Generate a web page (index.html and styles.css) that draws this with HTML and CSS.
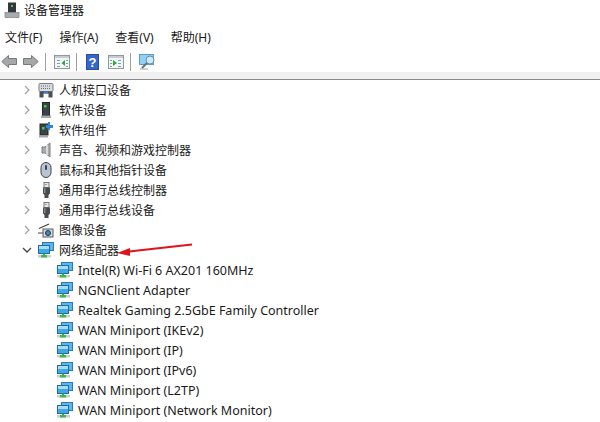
FILE: index.html
```html
<!DOCTYPE html>
<html lang="zh">
<head>
<meta charset="utf-8">
<title>设备管理器</title>
<link rel="stylesheet" href="styles.css">
</head>
<body>
<svg class="defs" width="0" height="0">
  <defs>
    <symbol id="net" viewBox="0 0 16 16">
      <rect x="4.500" y="0.500" width="11" height="8" fill="#5cb6ea" stroke="#2f78b0"/>
      <rect x="0.500" y="3.500" width="11" height="8" fill="#3fa8e4" stroke="#1f6aa8"/>
      <rect x="1" y="4" width="10" height="3" fill="#a8dcf5"/>
      <rect x="5" y="11.500" width="2" height="2" fill="#35a845"/>
      <rect x="0" y="13" width="13" height="2.500" fill="#c9cfca"/>
      <rect x="3" y="13" width="6" height="2.500" fill="#3fb651"/>
    </symbol>
    <symbol id="usb" viewBox="0 0 16 16">
      <rect x="6" y="0.500" width="5" height="5" fill="#e8e8e8" stroke="#777"/>
      <rect x="7.500" y="2" width="1" height="1" fill="#555"/>
      <path d="M5 5.500h7v6l-1.500 1.500v3h-4v-3L5 11.500z" fill="#4a4d50"/>
      <rect x="6" y="6" width="1.500" height="5" fill="#85888b"/>
    </symbol>
    <symbol id="chev-r" viewBox="0 0 10 10">
      <path d="M3 1l4 4-4 4" fill="none" stroke="#a6a6a6" stroke-width="1.300"/>
    </symbol>
    <symbol id="tower" viewBox="0 0 16 16">
      <rect x="4.500" y="0.500" width="7" height="13" fill="#3d4247" stroke="#22262a"/>
      <rect x="6" y="3" width="2.500" height="2.500" fill="#35d24a"/>
      <rect x="3" y="13.500" width="10" height="2.500" fill="#a4a7aa"/>
    </symbol>
  </defs>
</svg>
<div class="window">
  <header class="title">
    <svg class="title-icon" viewBox="0 0 16 16" width="16" height="16"><rect x="4" y="0.500" width="8" height="10" fill="#33373b"/><rect x="7" y="3" width="2" height="2" fill="#35d24a"/><rect x="1" y="10.500" width="14" height="5" fill="#a9acaf" stroke="#707478" stroke-width=".6"/></svg>
    <span>设备管理器</span>
  </header>
  <nav class="menu">
    <span>文件(F)</span><span>操作(A)</span><span>查看(V)</span><span>帮助(H)</span>
  </nav>
  <div class="toolbar">
    <svg width="16" height="15" viewBox="0 0 16 15"><path d="M.8 7.500l6.700-6v3h8v6h-8v3z" fill="#a5a8a8" stroke="#777a7a"/></svg>
    <svg width="16" height="15" viewBox="0 0 16 15"><path d="M15.200 7.500l-6.700-6v3h-8v6h8v3z" fill="#a5a8a8" stroke="#777a7a"/></svg>
    <i class="sep"></i>
    <svg width="16" height="14" viewBox="0 0 16 14"><rect x=".5" y=".5" width="15" height="13" fill="#f4f6f6" stroke="#8f9a9f"/><rect x="1" y="1" width="14" height="2" fill="#c3ccd2"/><path d="M3 5.500h3M3 8.500h3M3 11.500h3M12 5.500h2M12 8.500h2M12 11.500h2" stroke="#7aa0b8"/><path d="M11 5v6L7.500 8z" fill="#2fa838"/></svg>
    <i class="sep"></i>
    <svg class="tool-h" width="13" height="16" viewBox="0 0 13 16"><rect width="13" height="16" fill="#2b4ba8"/><rect x="1" y="1" width="11" height="14" fill="#3566c8"/><text x="6.500" y="13" class="help">?</text></svg>
    <svg width="16" height="14" viewBox="0 0 16 14"><rect x=".5" y=".5" width="15" height="13" fill="#f4f6f6" stroke="#8f9a9f"/><rect x="1" y="1" width="14" height="2" fill="#c3ccd2"/><path d="M2 5.500h2M2 8.500h2M2 11.500h2M10 5.500h3M10 8.500h3M10 11.500h3" stroke="#7aa0b8"/><path d="M5 5v6l4-3z" fill="#2fa838"/></svg>
    <i class="sep"></i>
    <svg width="17" height="16" viewBox="0 0 17 16"><rect x=".5" y=".5" width="14" height="10" fill="#8fd0f5" stroke="#5a9ecb"/><circle cx="11" cy="6" r="4" fill="#c9eafb" stroke="#6b8ca3"/><path d="M8 9l-5 5" stroke="#6a7278" stroke-width="2"/><path d="M1 15h8" stroke="#9aa2a8"/></svg>
  </div>
  <div class="band"></div>
  <main class="tree">
    <div class="row"><svg class="chev"><use href="#chev-r"/></svg><svg class="ico" viewBox="0 0 16 16"><rect x="1" y="1.500" width="14" height="8" rx="1" fill="#d8dadc" stroke="#7b7f83"/><path d="M3 4h10M3 6.500h10" stroke="#6d7175" stroke-dasharray="1 1"/><path d="M1.500 9.500v6h4v-4h5v4h4v-6z" fill="#4a4e52"/><rect x="6" y="9.500" width="4" height="2" fill="#2f86d6"/></svg><span>人机接口设备</span></div>
    <div class="row"><svg class="chev"><use href="#chev-r"/></svg><svg class="ico"><use href="#tower"/></svg><span>软件设备</span></div>
    <div class="row"><svg class="chev"><use href="#chev-r"/></svg><svg class="ico" viewBox="0 0 16 16"><rect x="2" y="2" width="8" height="11" fill="#3d4247" stroke="#22262a"/><rect x="4" y="5" width="2.500" height="2.500" fill="#35d24a"/><rect x="1" y="13.500" width="9" height="2" fill="#a4a7aa"/><path d="M12 0v3h3v3h-3v2H9.500V6H8V3h2V0z" fill="#2f86d6"/></svg><span>软件组件</span></div>
    <div class="row"><svg class="chev"><use href="#chev-r"/></svg><svg class="ico" viewBox="0 0 16 16"><path d="M4 5h3l5-4v14l-5-4H4z" fill="#a8abad" stroke="#7c8083"/><path d="M9 3v10" stroke="#d8dadb" stroke-width="2"/></svg><span>声音、视频和游戏控制器</span></div>
    <div class="row"><svg class="chev"><use href="#chev-r"/></svg><svg class="ico" viewBox="0 0 16 16"><rect x="3" y="0.500" width="10" height="15" rx="5" fill="#b8c4d2" stroke="#39424c"/><rect x="7" y="3" width="2" height="5" rx="1" fill="#3b4652"/></svg><span>鼠标和其他指针设备</span></div>
    <div class="row"><svg class="chev"><use href="#chev-r"/></svg><svg class="ico"><use href="#usb"/></svg><span>通用串行总线控制器</span></div>
    <div class="row"><svg class="chev"><use href="#chev-r"/></svg><svg class="ico"><use href="#usb"/></svg><span>通用串行总线设备</span></div>
    <div class="row"><svg class="chev"><use href="#chev-r"/></svg><svg class="ico" viewBox="0 0 16 16"><path d="M1 6.500L11 2" stroke="#444" stroke-width="1.200"/><path d="M0 11h6" stroke="#444"/><rect x="5" y="7" width="10" height="8" fill="#d5d8da" stroke="#5a5e62"/><circle cx="10" cy="11" r="2.500" fill="#2f8fd0" stroke="#333"/></svg><span>图像设备</span></div>
    <div class="row"><svg class="chev"><path d="M1 3l4 4 4-4" fill="none" stroke="#444" stroke-width="1.300"/></svg><svg class="ico"><use href="#net"/></svg><span>网络适配器</span></div>
    <div class="row child"><svg class="ico"><use href="#net"/></svg><span>Intel(R) Wi-Fi 6 AX201 160MHz</span></div>
    <div class="row child"><svg class="ico"><use href="#net"/></svg><span>NGNClient Adapter</span></div>
    <div class="row child"><svg class="ico"><use href="#net"/></svg><span>Realtek Gaming 2.5GbE Family Controller</span></div>
    <div class="row child"><svg class="ico"><use href="#net"/></svg><span>WAN Miniport (IKEv2)</span></div>
    <div class="row child"><svg class="ico"><use href="#net"/></svg><span>WAN Miniport (IP)</span></div>
    <div class="row child"><svg class="ico"><use href="#net"/></svg><span>WAN Miniport (IPv6)</span></div>
    <div class="row child"><svg class="ico"><use href="#net"/></svg><span>WAN Miniport (L2TP)</span></div>
    <div class="row child"><svg class="ico"><use href="#net"/></svg><span>WAN Miniport (Network Monitor)</span></div>
    <svg class="arrow" width="82" height="14" viewBox="0 0 82 14"><path d="M75 1.500L12 8.500" stroke="#e0141c" stroke-width="2.200"/><path d="M0 10l13-5 0 8z" fill="#e0141c"/></svg>
  </main>
</div>
</body>
</html>
```
FILE: styles.css
```css
* { box-sizing: border-box; }
html, body { margin: 0; height: 100%; }
body {
  background: #fff;
  color: #1a1a1a;
  font-family: "Noto Sans", "Noto Sans CJK SC", sans-serif;
  font-size: 12px;
  overflow: hidden;
}
.defs { position: absolute; }
.window { display: flex; flex-direction: column; width: 600px; height: 422px; overflow: hidden; }
.title { display: flex; align-items: center; gap: 4px; height: 20px; padding-left: 4px; color: #111; }
.title-icon { flex: none; }
.menu { display: flex; gap: 17px; height: 28px; padding: 8px 0 0 5px; line-height: 20px; }
.toolbar { display: flex; align-items: center; height: 24px; padding: 3px 0 0 1px; gap: 6px; }
.sep { width: 1px; height: 18px; background: #a0a0a0; margin-right: 2px; }
.tool-h { margin: 0 3px 0 1px; }
.help { fill: #fff; font: bold 13px "Liberation Sans", sans-serif; text-anchor: middle; }
.band { height: 8px; background: #f0f0f0; border-bottom: 1px solid #8a8a8a; }
.tree { position: relative; flex: 1; }
.row { display: flex; align-items: center; height: 20px; padding-left: 22px; white-space: nowrap; font-size: 12px; color: #1a1a1a; }
.row.child { padding-left: 57px; font-size: 12.500px; }
.chev { width: 10px; height: 10px; flex: none; margin-right: 6px; }
.ico { width: 16px; height: 16px; flex: none; margin-right: 5px; }
.arrow { position: absolute; left: 117px; top: 163px; }
```
